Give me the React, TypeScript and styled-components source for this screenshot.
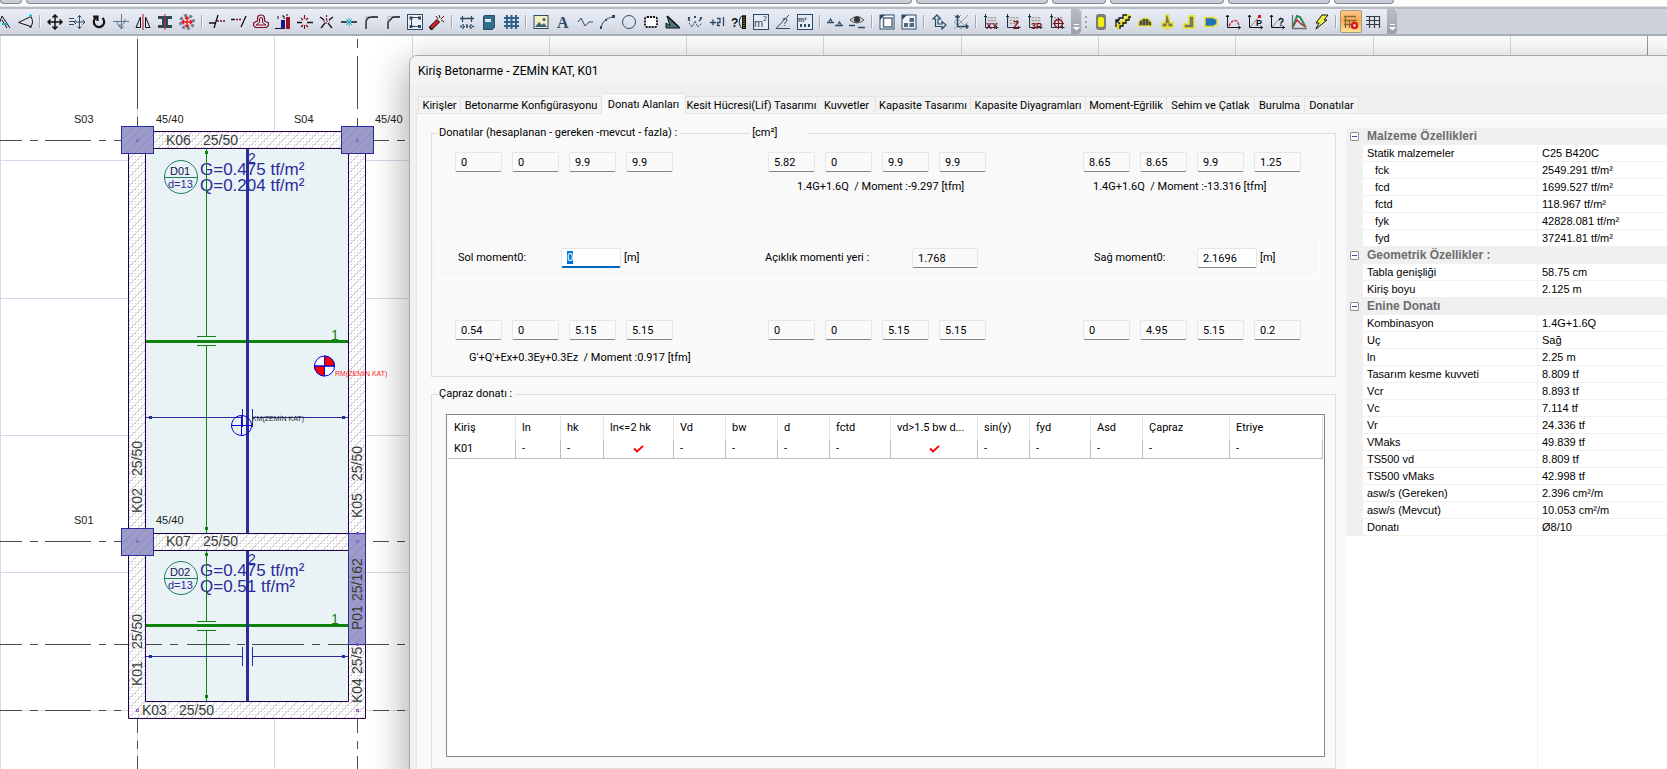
import React, { useEffect, useRef } from "react";
import styled, { createGlobalStyle, css } from "styled-components";

const GlobalStyle = createGlobalStyle`
  *, *::before, *::after { box-sizing: border-box; }
  html, body { margin: 0; height: 100%; }
  body { overflow: hidden; background: #fff; color: #000; font-family: Roboto, "Noto Sans", sans-serif; font-size: 11px; line-height: 14px; }
  button, input { font: inherit; color: inherit; }
  ::selection { background: #0078d7; color: #fff; }
`;

const Shell = styled.div`
  display: flex;
  flex-direction: column;
  height: 100vh;
`;

/* ---------- strip of document tabs above the toolbars ---------- */

const DocumentTabs = styled.div`
  display: flex;
  gap: 4px;
  flex: none;
  height: 6px;
  background: #fdfdfd;
  overflow: hidden;
`;

const DocumentTab = styled.div<{ $width: number }>`
  flex: 0 0 ${(p) => p.$width}px;
  height: 4px;
  border: 1px solid #85888f;
  border-top: 0;
  border-radius: 0 0 4px 4px;
  background: #cbced8;
`;

/* ---------- toolbars ---------- */

const ToolbarDock = styled.div`
  display: flex;
  flex: none;
  height: 30px;
  padding-top: 2px;
  border-top: 1px solid #dfe2e6;
  border-bottom: 2px solid #a9adb6;
  background: #cdd1da;
  box-shadow: inset 0 2px 0 #b7bbc4;
  overflow: hidden;
`;

const Toolbar = styled.div<{ $bleed?: boolean }>`
  display: flex;
  align-items: center;
  flex: none;
  margin-left: ${(p) => (p.$bleed ? -8 : 1)}px;
  background: linear-gradient(#e9edf6, #dfe3ed 50%, #cfd4df);
`;

const ToolButton = styled.button<{ $active?: boolean }>`
  display: flex;
  align-items: center;
  justify-content: center;
  width: 22px;
  height: 23px;
  padding: 0;
  border: 1px solid transparent;
  border-radius: 2px;
  background: none;
  ${(p) =>
    p.$active &&
    css`
      border-color: #a59a80;
      background: linear-gradient(#fbc98a, #f9ab4e 45%, #ffe39a);
    `}
`;

const Divider = styled.span`
  width: 2px;
  height: 13px;
  margin: 0 3px;
  border-left: 1px solid #a4a8b0;
  border-right: 1px solid #f5f6f9;
`;

const Grip = styled.span`
  width: 2px;
  height: 12px;
  margin: 0 3px;
  background: repeating-linear-gradient(#9ea2ad 0 2px, transparent 2px 5px);
`;

const Overflow = styled.button`
  align-self: stretch;
  display: flex;
  align-items: flex-end;
  justify-content: center;
  width: 10px;
  margin-left: 3px;
  padding: 0 0 3px;
  border: 0;
  border-radius: 0 4px 4px 0;
  background: linear-gradient(#b9bdc6, #9da0a7);
`;

const N = "#2c4a66";
const K = "#111";
const R = "#7d1020";

type LineProps = { d: string; c?: string; w?: number; f?: string; dash?: string };
const L = ({ d, c = N, w = 1, f = "none", dash }: LineProps) => (
  <path d={d} stroke={c} strokeWidth={w} fill={f} strokeDasharray={dash} />
);

const Axes = ({ c = K }: { c?: string }) => <L c={c} d="M2.500 1v12.500h13M1 3l1.500-2L4 3M13.500 12l2 1.500-2 1.500" />;

const Plot = ({ children }: { children: React.ReactNode }) => (
  <>
    <rect x="2" y="3" width="12" height="8" fill="#d4d6da" />
    <L c="#9a9da3" d="M2 3.500h12M5 6.500h9M5 9.500h9" dash="2 1" />
    <L c="#12343b" w={1} d="M2.500 0v13.500h13M1 2.500h3M13.500 12v3" />
    {children}
  </>
);

const Glyph = ({ x, y, s, c = R, children, bold = true }: { x: number; y: number; s: number; c?: string; bold?: boolean; children: string }) => (
  <text x={x} y={y} fontSize={s} fontWeight={bold ? 700 : 400} fill={c} fontFamily="Liberation Sans, sans-serif">
    {children}
  </text>
);

const icons: Record<string, React.ReactNode> = {
  angle: <><L c={K} d="M7 2l8 12M7 2l-4 11M7 6l5 8" /><L c="#19b5c9" w={2} d="M7 10h5" /></>,
  view: <><L c={K} d="M14 2.500c2 4 2 7 0 10L1.500 8.500z M12 13l3 0" /><L c="#19c5e0" w={2} d="M12 1.500h3" /></>,
  move: <L c={K} w={1.500} d="M8 1v14M1 8h14M5.500 3.500L8 1l2.500 2.500M5.500 12.500L8 15l2.500-2.500M3.500 5.500L1 8l2.500 2.500M12.500 5.500L15 8l-2.500 2.500" />,
  shift: <L d="M0 4.500h5M0 7.500h5M0 10.500h5M10.500 1v14M5 8h11M8.500 3.500l2-2 2 2M8.500 12.500l2 2 2-2M13.500 5.500L16 8l-2.500 2.500M7 6l-2 2 2 2" />,
  rotate: <L c={K} w={2.200} d="M11.500 4A5.200 5.200 0 1 1 5 3.600M2 2.500h4.500V7" />,
  node: <L c="#5b7590" d="M0 7.500h16M8.500 0v15M4 7c0 5 3 6 5 4M12 5c0 4-2 7-6 6M6 12l2.500 3 2.500-3" />,
  mirror: <><L c={K} d="M5.500 3v10.500H1zM10.500 3v10.500H15z" /><L c="#b01020" d="M8 0v16" /></>,
  section: <><path d="M1 2h14v3h-4v6h4v3H1v-3h4V5H1z" fill="#274b58" /><L c="#f01818" d="M8 0v16" /></>,
  explode: <><L c="#6b8496" w={3} d="M8 1.500a6.500 6.500 0 1 0 .1 0" dash="3 2" /><L c="#e81414" w={1.300} d="M8 3v10M3 8h10M6 5l2-2 2 2M6 11l2 2 2-2M5 6L3 8l2 2M11 6l2 2-2 2" /></>,
  trimA: <><L c={K} w={1.300} d="M9 1L5 14M0 9h6" /><L c={R} w={1.600} d="M8 7h8" dash="2 1" /></>,
  trimB: <><L c={K} w={1.300} d="M15 2l-5 11M0 5.500h4" /><L c={R} w={1.600} d="M5 5.500h6" dash="2 1" /></>,
  offset: <><L c={R} w={1.200} d="M4.500 7V4.500a3.500 3.500 0 0 1 7 0V7l4 2v2.500l-2 2h-11l-2-2V9z" /><L c={R} d="M6.500 8.500V5a1.500 1.500 0 0 1 3 0v3.500l3.500 2.500H3z" /></>,
  levels: <><path d="M6 6h4v9H6z" fill="#17178c" /><path d="M11 3h4v12h-4z" fill="#a01020" /><L c={K} d="M0 14.500h6M3 5V2M7 2h2v3M12 0v2" /></>,
  junction: <><L c={K} w={1.500} d="M0 8.500h5M10 8.500h6" /><L c={R} w={1.200} d="M7.500 1v4M7.500 11v4M4 4l2 2M11 4L9 6M4 13l2-2M11 13l-2-2" /></>,
  cross: <><L c={K} w={1.300} d="M2 14l4-5M13 14l-4-5M1 3l4 3M14 3l-4 3" /><L c={R} w={1.200} d="M7.500 1v5M4 7h7M6 9l3 0" dash="2 1" /></>,
  point: <><L c={K} w={1.500} d="M0 8h6M10 8h6" /><L c="#19a5c0" d="M8 4v8M5 5l6 6M11 5l-6 6M5 8h6" /></>,
  fillet: <><L c={K} w={1.300} d="M3 15V9q0-6 6-6h6" /><L c="#888" d="M3 8V2.500h6" dash="1 1" /></>,
  chamfer: <><L c={K} w={1.300} d="M3 15V8l5-5h7" /><L c="#888" d="M3 8V2.500h6" dash="1 1" /></>,
  frame: <><rect x=".5" y=".5" width="15" height="15" fill="#eef1f8" stroke={N} /><L d="M4.500 4.500v8h8M5 3.500h6" /><path d="M2.500 2.500h3v3h-3zM11 2.500h3v3h-3zM11 11h3v3h-3zM2.500 11h3v3h-3z" fill={N} /></>,
  wand: <><L c={K} w={4.500} d="M1 15l8.500-8.500" /><L c="#d32020" w={3} d="M2 14l7-7" /><L c="#5b1a1a" d="M10 1l1 3M15 2l-3 3M15 8l-3-2M7 2l2 3" /></>,
  span: <><L w={1.300} d="M1 4.500h14M3.500 2v6M12.500 2v6" /><L w={1.300} d="M1 12.500h14M4 10v5M12 10v5M8 10v4" dash="2 1" /></>,
  book: <><path d="M3.500 1.500h10v12l-2 2h-9v-13z" fill="#2f6f8c" stroke={N} /><path d="M4 5h6v3H4z" fill="#dfeaf0" /></>,
  grid: <L c="#2d6388" w={2} d="M4 1v14M8.500 1v14M13 1v14M1 4h15M1 8h15M1 12h15" />,
  image: <><rect x="1" y="1.500" width="14" height="13" fill="#f3efc2" stroke={N} /><path d="M2 13l4-5 3 3 2-2 3 4z" fill="#39627c" /><circle cx="11" cy="5.500" r="1.500" fill="#39627c" /></>,
  text: <text x="2" y="14" fontSize="16" fontWeight="700" fill={N} fontFamily="Liberation Serif, serif">A</text>,
  polyline: <L d="M1 8l3-4 4 8 4-4h4" />,
  arc: <><L d="M2 14C3 8 7 4 14 3" /><path d="M1 12h2v3H1zM6 5h2v2H6zM13 1h3v3h-3z" fill={N} /></>,
  circle: <circle cx="8" cy="8" r="6.500" fill="none" stroke={N} />,
  cloud: <><rect x="2" y="3" width="12" height="10" rx="2" fill="#fff" /><rect x="2" y="3" width="12" height="10" rx="2" fill="none" stroke={K} strokeWidth="1.800" strokeDasharray="2 1" /></>,
  setSquare: <><path d="M2 2l13 12H1V9l4 3z" fill="#4d7384" stroke={K} /><L c={K} d="M2 2l12 11" w={1.500} /></>,
  wave: <><L d="M2 9l3 4 3-6 3 6 4-4" dash="2 1" /><L d="M1 5l2 2M14 5l-2 2" w={1.500} /><path d="M1 3h2v2H1zM7 2h2v2H7zM13 3h2v2h-2z" fill={N} /></>,
  plusTwo: <L w={1.300} d="M1 8.500h6M4 5.500v6M8 4.500h3v4H8.500v3H11M14.500 3v9" />,
  measure: <><Glyph x={0} y={13} s={12} c={K}>?</Glyph><path d="M11 1h4v14h-4z" fill={K} /><L c="#f2cf2a" w={1} d="M13 1v14" dash="1 1" /><L c={K} d="M10.500 2c-3 4-3 8 0 12" /></>,
  area: <><rect x=".5" y=".5" width="15" height="15" fill="#e6ebf3" stroke={N} /><Glyph x={1} y={13} s={11} c={N} bold={false}>m</Glyph><Glyph x={10} y={7} s={7} c={N} bold={false}>2</Glyph></>,
  angleQuery: <><L d="M14 1L1 14.500h14" /><Glyph x={7} y={12} s={10} c={N} bold={false}>?</Glyph></>,
  millis: <><rect x=".5" y=".5" width="15" height="15" fill="#e6ebf3" stroke={N} /><Glyph x={1} y={8} s={7} c={N}>m²</Glyph><L w={3} d="M3 11.500h11" dash="2 2" /></>,
  level: <L w={1.300} d="M0 8.500h7M2 7.500L3.500 5 5 7.500M8 11.500h8M11 10.500L12.500 8l1.500 2.500" />,
  eye: <><path d="M1 6q7-7 14 0-7 6-14 0z" fill="#cfcfcf" stroke="#555" /><circle cx="8" cy="5.500" r="3" fill="#333" /><L d="M0 11.500h6M9 13.500h7" w={1.500} /></>,
  pages: <><rect x="1" y="1" width="14" height="14" fill="#fff" stroke={N} /><rect x="4.500" y="4" width="8.500" height="9" fill="#fff" stroke="#50687f" strokeWidth="1.500" /><path d="M1 6V1h5z" fill={N} /></>,
  sheets: <><rect x="1" y="1" width="14" height="14" fill="#f1f3f8" stroke={N} /><path d="M8.500 4H13v4H8.500zM3 9h4v4H3zM8.500 9H13v4H8.500z" fill="#50687f" /><path d="M1 6V1h5z" fill={N} /></>,
  ucs: <L w={1.200} d="M4.500 12.500V5H2l4-4 3.500 4H7v5h4V7.500L15 11l-4 4v-2.500z" />,
  ucsOff: <><L c="#9aa1ab" d="M1 1l14 14M15 1L1 15M1 8l7-7M8 15l7-7M1 8l7 7" /><L w={1.500} d="M4.500 1v11.500H15M2.500 3.500l2-2 2 2M13 10.500l2 2-2 2" /></>,
  xy: <Plot><Glyph x={3} y={15} s={9}>XY</Glyph></Plot>,
  z: <Plot><Glyph x={8} y={15} s={10}>Z</Glyph></Plot>,
  threeP: <Plot><Glyph x={4} y={15} s={9}>3P</Glyph></Plot>,
  target: <Plot><circle cx="9.500" cy="9.500" r="4" fill="none" stroke={R} strokeWidth="1.500" /><L c={R} d="M9.500 4v11M4 9.500h11" /></Plot>,
  column: <><rect x="3" y="0" width="10" height="16" rx="3" fill="#7e7e72" /><rect x="5" y="3" width="6" height="10" rx="2" fill="#f3f00a" /></>,
  stairs: <><L c="#e8e21a" w={3} d="M3 15v-4h3V8h4V5h3V2h3" /><L c={K} w={1.300} d="M1 13V6h3V4h4V1h4M5 15v-3h3V9h3V6h3V3h2M1 6l4 4" /></>,
  dome: <><path d="M1 12q0-7 7-8 7 1 7 8z" fill="#8b8a5a" stroke="#e8e21a" /><L c={K} d="M4 11V7M7 11V5M10 11V5M13 11V8" /></>,
  footing: <><path d="M7 1h2l2 8h3v4H3V9h3z" fill="#77765f" stroke="#e6dc1c" strokeWidth="1.300" /><L c="#e6dc1c" w={2} d="M8.500 9v7" /></>,
  wall: <path d="M8 2h5v12H3v-4h5z" fill="#77776d" stroke="#ece61a" strokeWidth="1.500" />,
  slab: <path d="M2 3.500h8l4 2v5l-4 2H2z" fill="#2370b5" stroke="#e2de30" strokeWidth="1.500" />,
  curve: <><Axes /><L c="#c02030" w={1.300} d="M4 12c2-5 5-6 8-5l2 4" dash="3 1" /></>,
  curveP: <><Axes /><L c="#888" d="M3 13L12 3" /><path d="M11 1h3v3h-3z" fill="#e01818" /><Glyph x={9} y={12} s={9} c={K}>P</Glyph></>,
  curveQ: <><Axes /><L c="#888" d="M3 13L12 3" /><Glyph x={9} y={12} s={10} c={K}>?</Glyph></>,
  spectrum: <><L c="#6c6f78" w={1.300} d="M1.500 1v13.500H16" /><L c="#d12525" w={1.500} d="M2 13L6 6l4 4 5 3" /><L c="#2a8a50" w={2} d="M2 12L6 2l3 1 5 9" /></>,
  bolt: <path d="M9 1h6l-4 5h3L3 15l3-6H3z" fill="#f6f04c" stroke={K} />,
  rebarTable: <><L c="#8b6a3a" w={1.300} d="M1 2.500h12M1 6.500h13M1 10.500h13M2.500 2v12M6.500 6v8M10.500 6v8" /><circle cx="11.500" cy="11.500" r="2.500" fill="#fff" stroke="#e01818" strokeWidth="2.500" /></>,
  table: <L c="#333a44" w={1.200} d="M1 2.500h14M1 6.500h14M1 10.500h14M4.500 2v12M9.500 2v12M14.500 2v12" />,
};

const Icon = ({ name }: { name: string }) => (
  <svg width="16" height="16" viewBox="0 0 16 16" aria-hidden="true">
    {icons[name]}
  </svg>
);

const drawTools = [
  ["angle", "view"],
  ["move", "shift", "rotate", "node", "mirror", "section", "explode"],
  ["trimA", "trimB", "offset", "levels", "junction", "cross", "point", "fillet", "chamfer", "frame", "wand"],
  ["span", "book", "grid"],
  ["image", "text", "polyline", "arc", "circle", "cloud", "setSquare", "wave", "plusTwo", "measure", "area", "angleQuery", "millis"],
  ["level", "eye"],
  ["pages", "sheets"],
  ["ucs", "ucsOff"],
  ["xy", "z", "threeP", "target"],
];

const modelTools = [
  ["column", "stairs", "dome", "footing", "wall", "slab", "curve", "curveP", "curveQ", "spectrum", "bolt"],
  ["rebarTable", "table"],
];

const ToolGroups = ({ groups, active }: { groups: string[][]; active?: string }) => (
  <>
    {groups.map((group, i) => (
      <React.Fragment key={group[0]}>
        {i > 0 && <Divider />}
        {group.map((name) => (
          <ToolButton key={name} type="button" aria-label={name} $active={name === active}>
            <Icon name={name} />
          </ToolButton>
        ))}
      </React.Fragment>
    ))}
  </>
);

const OverflowButton = () => (
  <Overflow type="button" aria-label="more">
    <svg width="7" height="7" viewBox="0 0 7 7" aria-hidden="true">
      <path d="M1 .5h5" stroke="#fff" />
      <path d="M0 3h7L3.500 6.500z" fill="#fff" />
    </svg>
  </Overflow>
);

/* ---------- plan drawing ---------- */

const Workspace = styled.main`
  position: relative;
  flex: 1;
  min-height: 0;
  overflow: hidden;
  background: #fff;
`;

const Drawing = styled.svg`
  display: block;
  width: 100%;
  height: 100%;
  font-family: "Liberation Sans", Arial, sans-serif;
`;

const INK = "#2b2b99";
const GREEN = "#0f820f";
const EDGE = "#26004d";

const Beam = ({ x, y, w, h }: { x: number; y: number; w: number; h: number }) => (
  <>
    <rect x={x} y={y} width={w} height={h} fill="#fff" />
    <rect x={x} y={y} width={w} height={h} fill="url(#dots)" />
    <rect x={x} y={y} width={w} height={h} fill="url(#hatch)" />
  </>
);

const ColumnMark = ({ x, y, w = 32, h = 27 }: { x: number; y: number; w?: number; h?: number }) => (
  <>
    <rect x={x} y={y} width={w} height={h} fill="#9c9bcb" />
    <rect x={x} y={y} width={w} height={h} fill="url(#hatchDark)" stroke={INK} />
  </>
);

const Slab = ({ name, load, cy }: { name: string; load: string; cy: number }) => (
  <>
    <circle cx="181" cy={cy} r="16.500" fill="none" stroke="#1c7d62" />
    <path d={`M164 ${cy + 0.5}h34`} stroke="#1c7d62" />
    <g fill={INK}>
      <text x="170" y={cy - 2} fontSize="11" fill="#111150">{name}</text>
      <text x="168" y={cy + 11} fontSize="11">d=13</text>
      <text x="200" y={cy - 2} fontSize="17">G=0.475 tf/m²</text>
      <text x="200" y={cy + 14} fontSize="17">{load}</text>
      <text x="248" y={cy - 14} fontSize="14">2</text>
    </g>
  </>
);

const Upright = ({ x, y, children }: { x: number; y: number; children: string }) => (
  <text transform={`translate(${x} ${y}) rotate(-90)`}>{children}</text>
);

const vGrid = [0, 137, 274, 412, 549, 686, 823, 961, 1098, 1235, 1373, 1510];
const hGrid = [160, 298, 435, 572, 710];

const Plan = () => (
  <Drawing role="img" aria-label="Kat planı">
    <defs>
      <pattern id="dots" width="3" height="3" patternUnits="userSpaceOnUse">
        <rect width="1" height="1" fill="#cfcfcf" />
      </pattern>
      <pattern id="hatch" width="9" height="9" patternUnits="userSpaceOnUse">
        <path d="M-1 10L10-1" stroke="#c8c8c8" />
      </pattern>
      <pattern id="hatchDark" width="9" height="9" patternUnits="userSpaceOnUse">
        <path d="M-1 10L10-1" stroke="#8d8bb0" />
      </pattern>
    </defs>
    {/* page coordinates: the sheet starts below the 36px of toolbars */}
    <g transform="translate(0 -36)">
      <g stroke="#d8d8ec">
        {vGrid.map((x) => <path key={x} d={`M${x + 0.5} 36V2000`} />)}
        {hGrid.map((y) => <path key={y} d={`M0 ${y + 0.5}H412`} />)}
      </g>
      <path d="M1647.500 36V60" stroke="#999" />
      <g stroke="#4a4a4a" fill="none">
        {[140.5, 541.5, 710.5].map((y) => (
          <path key={y} d={`M0 ${y}h22M30 ${y}h8M45 ${y}h46M99 ${y}h7M114 ${y}h7M373 ${y}h16M397 ${y}h8`} />
        ))}
        <path d="M137.500 39v70M137.500 117v9M357.500 39v9M357.500 56v53M357.500 118v8" />
        <path d="M137.500 719v14M137.500 741v8M137.500 756v46M357.500 719v14M357.500 741v8M357.500 756v46" />
        <path d="M0 644.500h22M30 644.500h8M45 644.500h46M99 644.500h7M114 644.500h14M366 644.500h23M397 644.500h8" />
      </g>

      <rect x="145" y="148" width="203" height="554" fill="#e9f3f6" />
      <path d="M146 644.500h16M170 644.500h8M187 644.500h43M237 644.500h8M252 644.500h52M312 644.500h8M328 644.500h20" stroke="#4a4a4a" />
      <Beam x={128} y={131} w={238} h={18} />
      <Beam x={128} y={149} w={17} h={553} />
      <Beam x={348} y={149} w={18} h={553} />
      <Beam x={145} y={533} w={203} h={18} />
      <Beam x={128} y={701} w={238} h={18} />
      <path d="M128.500 131.500h237v587h-237zM145.500 148.500h203v385h-203zM145.500 550.500h203v151h-203z" fill="none" stroke={EDGE} />

      <g fontSize="14" fill="#3a3a3a">
        <text x="166" y="145">K06</text><text x="203" y="145">25/50</text>
        <text x="166" y="546">K07</text><text x="203" y="546">25/50</text>
        <text x="142" y="715">K03</text><text x="179" y="715">25/50</text>
      </g>

      <Slab name="D01" load="Q=0.204 tf/m²" cy={177} />
      <Slab name="D02" load="Q=0.51 tf/m²" cy={578} />

      <g stroke={GREEN} fill="none">
        <path d="M206.500 149v187M206.500 345v188M206.500 551v70M206.500 630v71M197 336.500h19M197 345.500h19M197 621.500h19M197 630.500h19" />
        <path d="M146 341.500h202M146 625.500h202" strokeWidth="3" />
      </g>
      <path d="M205 151h3v3h-3zM205 527h3v3h-3zM205 553h3v3h-3zM205 695h3v3h-3z" fill={GREEN} />
      <g stroke={INK} fill="none">
        <path d="M146 417.500h96M253 417.500h95M146 656.500h96M253 656.500h95M242.500 409v18M252.500 409v18M242.500 647v19M252.500 647v19" />
        <path d="M247.500 149v384M247.500 551v150" strokeWidth="3" />
      </g>
      <path d="M149 416h3v3h-3zM342 416h3v3h-3zM149 655h3v3h-3zM342 655h3v3h-3z" fill={INK} />
      <g fontSize="14" fill={GREEN}><text x="331" y="340">1</text><text x="331" y="624">1</text></g>

      <ColumnMark x={121.5} y={126.5} />
      <ColumnMark x={341.5} y={126.5} />
      <ColumnMark x={121.5} y={528.5} />
      <ColumnMark x={348.5} y={533.5} w={17} h={111} />
      <g fill="none" stroke="#9b5bd0">
        {[[137, 140], [357, 140], [137, 541], [357, 541], [357, 533], [357, 644], [137, 710], [357, 710]].map(([x, y]) => (
          <rect key={`${x}-${y}`} x={x - 0.5} y={y - 0.5} width="2" height="2" />
        ))}
      </g>

      <g fontSize="14" fill="#3a3a3a">
        <Upright x={142} y={513}>K02</Upright><Upright x={142} y={476}>25/50</Upright>
        <Upright x={142} y={686}>K01</Upright><Upright x={142} y={649}>25/50</Upright>
        <Upright x={362} y={518}>K05</Upright><Upright x={362} y={481}>25/50</Upright>
        <Upright x={362} y={630}>P01</Upright><Upright x={362} y={601}>25/162</Upright>
        <Upright x={362} y={703}>K04</Upright><Upright x={362} y={674}>25/5</Upright>
      </g>

      <g fontSize="11" fill="#222">
        <text x="74" y="123">S03</text><text x="156" y="123">45/40</text>
        <text x="294" y="123">S04</text><text x="375" y="123">45/40</text>
        <text x="74" y="524">S01</text><text x="156" y="524">45/40</text>
      </g>

      <g stroke="#0000e0">
        <circle cx="324.500" cy="366" r="10" fill="#fff" />
        <path d="M324.500 366V356a10 10 0 0 1 10 10zM324.500 366V376a10 10 0 0 1-10-10z" fill="#f00" />
        <path d="M314 366h21M324.500 356v20" />
        <path d="M231 425.500h21M241.500 415v21M241.500 415.500a10 10 0 1 0 .1 0" fill="none" />
      </g>
      <text x="335" y="376" fontSize="7" fill="#f22">RM(ZEMİN KAT)</text>
      <text x="252" y="421" fontSize="7" fill="#222">KM(ZEMİN KAT)</text>
    </g>
  </Drawing>
);

/* ---------- dialog window ---------- */

const Dialog = styled.section`
  position: absolute;
  left: 409px;
  top: 19px;
  right: -12px;
  bottom: -12px;
  display: flex;
  flex-direction: column;
  border: 1px solid #a9a9ab;
  border-radius: 8px;
  background: #f0f0f0;
  box-shadow: 0 12px 36px 4px rgba(0, 0, 0, 0.32);
  overflow: hidden;
`;

const TitleBar = styled.h1`
  flex: none;
  margin: 0;
  padding: 0 8px;
  background: #f3f3f3;
  font-size: 12px;
  font-weight: 400;
  line-height: 30px;
`;

const TabList = styled.div`
  display: flex;
  align-items: flex-end;
  flex: none;
  height: 28px;
  padding-left: 8px;
`;

const Tab = styled.button<{ $width: number; $selected?: boolean }>`
  flex: 0 0 ${(p) => p.$width}px;
  height: 18px;
  padding: 0;
  border: 1px solid #e3e3e3;
  border-bottom: 0;
  border-left-width: 0;
  background: #f3f3f3;
  line-height: 17px;
  white-space: nowrap;
  ${(p) =>
    p.$selected &&
    css`
      z-index: 1;
      height: 21px;
      background: #f9f9f9;
    `}
  &:first-child { border-left-width: 1px; }
`;

const TabPage = styled.div`
  display: flex;
  flex: 1;
  gap: 10px;
  min-height: 0;
  margin: -1px 0 0 6px;
  padding: 12px 0 11px 14px;
  border-top: 1px solid #e5e5e5;
  border-left: 1px solid #e5e5e5;
  background: #f9f9f9;
`;

const MainColumn = styled.div`
  display: flex;
  flex: 1;
  flex-direction: column;
  gap: 10px;
  min-width: 0;
`;

const Group = styled.fieldset<{ $fill?: boolean }>`
  display: flex;
  flex-direction: column;
  flex: ${(p) => (p.$fill ? 1 : "none")};
  min-width: 0;
  min-height: 0;
  margin: 0;
  padding: ${(p) => (p.$fill ? "13px 10px 11px 14px" : "12px 0 11px")};
  border: 1px solid #dcdcdc;
`;

const Legend = styled.legend<{ $offset?: number }>`
  display: flex;
  align-items: center;
  margin-left: ${(p) => p.$offset ?? 6}px;
  padding: 0 3px 0 1px;
  white-space: nowrap;
`;

const LegendRule = styled.span`
  width: 70px;
  height: 1px;
  margin: 0 2px 0 3px;
  background: #dcdcdc;
`;

const Unit = styled.span<{ $tail?: boolean }>`
  margin-left: ${(p) => (p.$tail ? 0 : 3)}px;
  padding-right: ${(p) => (p.$tail ? 28 : 0)}px;
`;

const ValueGrid = styled.div<{ $lower?: boolean }>`
  display: grid;
  grid-template-columns: 313fr 315fr 252fr;
  row-gap: ${(p) => (p.$lower ? 11 : 8)}px;
  padding-left: 23px;
`;

const Values = styled.div`
  display: flex;
  gap: 10px;
`;

const Note = styled.p<{ $indent: number }>`
  min-height: 14px;
  margin: 0;
  padding-left: ${(p) => p.$indent}px;
  white-space: pre;
`;

const Field = styled.input<{ $width?: number }>`
  flex: none;
  width: ${(p) => p.$width ?? 47}px;
  height: 20px;
  padding: 0 5px;
  border: 1px solid #e6e6e6;
  border-bottom-color: #868686;
  border-radius: 2px;
  background: #fff;
  outline: none;
  &:read-only { background: #fafafa; }
  &:focus { border-bottom: 2px solid #0067c0; }
`;

const MomentBar = styled.div`
  display: grid;
  grid-template-columns: 307fr 329fr 225fr;
  align-items: center;
  height: 42px;
  margin: 43px 15px 41px 6px;
  padding-left: 19px;
  border: 1px solid #fff;
`;

const MomentItem = styled.div`
  display: flex;
  align-items: center;
`;

const MomentLabel = styled.label<{ $width: number }>`
  flex: 0 0 ${(p) => p.$width}px;
`;

const ListFrame = styled.div`
  flex: 1;
  min-height: 0;
  padding: 1px;
  border: 1px solid #828790;
  background: #fff;
  overflow: hidden;
`;

const ResultTable = styled.table`
  width: 100%;
  table-layout: fixed;
  border-collapse: separate;
  border-spacing: 0;
  th, td {
    padding: 0 6px;
    border-right: 1px solid #e5e5e5;
    font-weight: 400;
    text-align: left;
    white-space: nowrap;
  }
  th { height: 24px; overflow: hidden; text-overflow: ellipsis; }
  td { height: 19px; border-right-color: #bdbdbd; border-bottom: 1px solid #bdbdbd; }
`;

const Col = styled.col<{ $width?: number }>`
  width: ${(p) => (p.$width ? `${p.$width}px` : "auto")};
`;

const Tick = styled.svg`
  display: block;
  margin: 0 auto;
`;

/* ---------- property grid ---------- */

const Properties = styled.aside`
  display: flex;
  flex: 0 0 332px;
  flex-direction: column;
  margin-top: 2px;
  background: #fff;
  font-family: "Liberation Sans", Arial, sans-serif;
`;

const PropertyTable = styled.table`
  width: 100%;
  table-layout: fixed;
  border-collapse: separate;
  border-spacing: 0;
`;

const SectionCell = styled.th`
  height: 17px;
  padding: 0 4px 1px;
  background: #f0f0f0;
  color: #6d6d6d;
  font-size: 12px;
  line-height: 16px;
  text-align: left;
`;

const Gutter = styled.td`
  padding: 0 4px;
  background: #f0f0f0;
`;

const NameCell = styled.th<{ $nested?: boolean }>`
  height: 17px;
  padding: 0 0 0 ${(p) => (p.$nested ? 12 : 4)}px;
  border-right: 1px solid #f0f0f0;
  border-bottom: 1px solid #f0f0f0;
  font-weight: 400;
  line-height: 16px;
  text-align: left;
`;

const ValueCell = styled.td`
  padding: 0 0 0 4px;
  border-bottom: 1px solid #f0f0f0;
  line-height: 16px;
`;

const Rest = styled.div`
  flex: 1;
  width: 192px;
  border-right: 1px solid #f0f0f0;
`;

const Toggle = styled.button`
  display: flex;
  align-items: center;
  justify-content: center;
  width: 9px;
  height: 9px;
  padding: 0;
  border: 1px solid #919191;
  border-radius: 1px;
  background: #fafafa;
  &::before { content: ""; width: 5px; height: 1px; background: #2f4fa5; }
`;

const sections: { title: string; rows: [string, string, boolean?][] }[] = [
  {
    title: "Malzeme Özellikleri",
    rows: [
      ["Statik malzemeler", "C25 B420C"],
      ["fck", "2549.291 tf/m²", true],
      ["fcd", "1699.527 tf/m²", true],
      ["fctd", "118.967 tf/m²", true],
      ["fyk", "42828.081 tf/m²", true],
      ["fyd", "37241.81 tf/m²", true],
    ],
  },
  { title: "Geometrik Özellikler :", rows: [["Tabla genişliği", "58.75 cm"], ["Kiriş boyu", "2.125 m"]] },
  {
    title: "Enine Donatı",
    rows: [
      ["Kombinasyon", "1.4G+1.6Q"],
      ["Uç", "Sağ"],
      ["ln", "2.25 m"],
      ["Tasarım kesme kuvveti", "8.809 tf"],
      ["Vcr", "8.893 tf"],
      ["Vc", "7.114 tf"],
      ["Vr", "24.336 tf"],
      ["VMaks", "49.839 tf"],
      ["TS500 vd", "8.809 tf"],
      ["TS500 vMaks", "42.998 tf"],
      ["asw/s (Gereken)", "2.396 cm²/m"],
      ["asw/s (Mevcut)", "10.053 cm²/m"],
      ["Donatı", "Ø8/10"],
    ],
  },
];

const tabs: [string, number][] = [
  ["Kirişler", 43],
  ["Betonarme Konfigürasyonu", 141],
  ["Donatı Alanları", 84],
  ["Kesit Hücresi(Lif) Tasarımı", 132],
  ["Kuvvetler", 58],
  ["Kapasite Tasarımı", 95],
  ["Kapasite Diyagramları", 115],
  ["Moment-Eğrilik", 81],
  ["Sehim ve Çatlak", 88],
  ["Burulma", 50],
  ["Donatılar", 54],
];

type Block = { values: string[]; note: string; indent: number };

const upper: Block[] = [
  { values: ["0", "0", "9.9", "9.9"], note: "", indent: 0 },
  { values: ["5.82", "0", "9.9", "9.9"], note: "1.4G+1.6Q  / Moment :-9.297 [tfm]", indent: 29 },
  { values: ["8.65", "8.65", "9.9", "1.25"], note: "1.4G+1.6Q  / Moment :-13.316 [tfm]", indent: 10 },
];

const lower: Block[] = [
  { values: ["0.54", "0", "5.15", "5.15"], note: "G'+Q'+Ex+0.3Ey+0.3Ez  / Moment :0.917 [tfm]", indent: 14 },
  { values: ["0", "0", "5.15", "5.15"], note: "", indent: 0 },
  { values: ["0", "4.95", "5.15", "0.2"], note: "", indent: 0 },
];

const columns: [string, number?][] = [
  ["Kiriş", 68], ["ln", 45], ["hk", 43], ["ln<=2 hk", 70], ["Vd", 52], ["bw", 52], ["d", 52],
  ["fctd", 61], ["vd>1.5 bw d...", 87], ["sin(y)", 52], ["fyd", 61], ["Asd", 52], ["Çapraz", 87], ["Etriye"],
];

const kinds = ["hesaplanan", "gereken", "mevcut", "fazla"];

const Blocks = ({ blocks, isLower }: { blocks: Block[]; isLower?: boolean }) => (
  <ValueGrid $lower={isLower}>
    {blocks.map((b, i) => (
      <Values key={i}>
        {b.values.map((v, j) => <Field key={j} readOnly defaultValue={v} aria-label={kinds[j]} />)}
      </Values>
    ))}
    {blocks.map((b, i) => <Note key={i} $indent={b.indent}>{b.note}</Note>)}
  </ValueGrid>
);

export default function App() {
  const first = useRef<HTMLInputElement>(null);
  useEffect(() => {
    first.current?.focus({ preventScroll: true });
    first.current?.select();
  }, []);

  return (
    <Shell>
      <GlobalStyle />
      <DocumentTabs>
        {[22, 886, 132, 54, 114, 102, 60].map((w, i) => <DocumentTab key={i} $width={w} />)}
      </DocumentTabs>
      <ToolbarDock>
        <Toolbar $bleed>
          <ToolGroups groups={drawTools} />
          <OverflowButton />
        </Toolbar>
        <Toolbar>
          <Grip />
          <ToolGroups groups={modelTools} active="rebarTable" />
          <OverflowButton />
        </Toolbar>
      </ToolbarDock>

      <Workspace>
        <Plan />
        <Dialog role="dialog" aria-labelledby="dialog-title">
          <TitleBar id="dialog-title">Kiriş Betonarme - ZEMİN KAT, K01</TitleBar>
          <TabList role="tablist">
            {tabs.map(([label, width]) => (
              <Tab
                key={label}
                type="button"
                role="tab"
                $width={width}
                $selected={label === "Donatı Alanları"}
                aria-selected={label === "Donatı Alanları"}
              >
                {label}
              </Tab>
            ))}
          </TabList>
          <TabPage role="tabpanel">
            <MainColumn>
              <Group>
                <Legend>
                  Donatılar (hesaplanan - gereken -mevcut - fazla) :
                  <LegendRule />
                  <Unit $tail>[cm²]</Unit>
                </Legend>
                <Blocks blocks={upper} />
                <MomentBar>
                  <MomentItem>
                    <MomentLabel $width={103} htmlFor="m-left">Sol moment0:</MomentLabel>
                    <Field ref={first} id="m-left" $width={60} defaultValue="0" />
                    <Unit>[m]</Unit>
                  </MomentItem>
                  <MomentItem>
                    <MomentLabel $width={147} htmlFor="m-mid">Açıklık momenti yeri :</MomentLabel>
                    <Field id="m-mid" $width={66} readOnly defaultValue="1.768" />
                  </MomentItem>
                  <MomentItem>
                    <MomentLabel $width={103} htmlFor="m-right">Sağ moment0:</MomentLabel>
                    <Field id="m-right" $width={60} defaultValue="2.1696" />
                    <Unit>[m]</Unit>
                  </MomentItem>
                </MomentBar>
                <Blocks blocks={lower} isLower />
              </Group>

              <Group $fill>
                <Legend $offset={-8}>Çapraz donatı :</Legend>
                <ListFrame>
                  <ResultTable>
                    <colgroup>{columns.map(([c, w]) => <Col key={c} $width={w} />)}</colgroup>
                    <thead>
                      <tr>{columns.map(([c]) => <th key={c} scope="col">{c}</th>)}</tr>
                    </thead>
                    <tbody>
                      <tr>
                        {columns.map(([c], i) => (
                          <td key={c}>
                            {i === 0 ? "K01" : i === 3 || i === 8 ? (
                              <Tick width="11" height="8" viewBox="0 0 11 8" role="img" aria-label="evet">
                                <path d="M1 3.500l3 3L10 1" fill="none" stroke="#f00" strokeWidth="1.800" />
                              </Tick>
                            ) : "-"}
                          </td>
                        ))}
                      </tr>
                    </tbody>
                  </ResultTable>
                </ListFrame>
              </Group>
            </MainColumn>

            <Properties>
              <PropertyTable>
                <colgroup>
                  <Col $width={17} />
                  <Col $width={175} />
                  <Col />
                </colgroup>
                <tbody>
                  {sections.map((s) => (
                    <React.Fragment key={s.title}>
                      <tr>
                        <Gutter><Toggle type="button" aria-label={s.title} aria-expanded="true" /></Gutter>
                        <SectionCell colSpan={2} scope="colgroup">{s.title}</SectionCell>
                      </tr>
                      {s.rows.map(([name, value, nested]) => (
                        <tr key={name}>
                          <Gutter />
                          <NameCell scope="row" $nested={nested}>{name}</NameCell>
                          <ValueCell>{value}</ValueCell>
                        </tr>
                      ))}
                    </React.Fragment>
                  ))}
                </tbody>
              </PropertyTable>
              <Rest />
            </Properties>
          </TabPage>
        </Dialog>
      </Workspace>
    </Shell>
  );
}
